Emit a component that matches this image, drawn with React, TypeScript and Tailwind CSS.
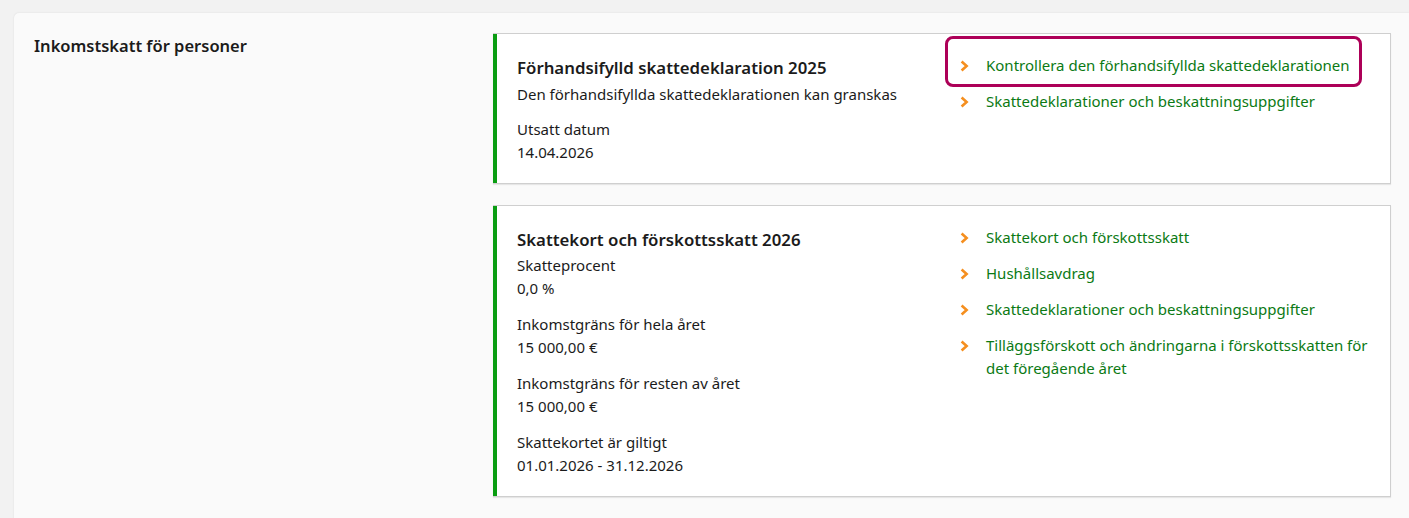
type Row = { label: string; value: string }

interface InfoCardProps {
  title: string
  intro?: string
  rows: Row[]
  links: string[]
  focused?: number
}

function Chevron() {
  return (
    <svg width="9" height="12" viewBox="0 0 9 12" className="shrink-0 mt-[6px]">
      <path d="M1.6 1.6 L6.6 6 L1.6 10.4" fill="none" stroke="#f58f1f" strokeWidth="2.6" strokeLinejoin="miter" />
    </svg>
  )
}

function InfoCard({ title, intro, rows, links, focused }: InfoCardProps) {
  return (
    <div className="flex bg-white border border-[#cfcfcf] border-l-0 shadow-[0_1px_1px_rgba(0,0,0,0.08)]">
      <div className="w-1 shrink-0 bg-[#0a9d12]" />
      <div className="flex-1 grid grid-cols-[428px_1fr] pl-5 pr-5 pt-5 pb-[19px]">
        <div className="flex flex-col">
          <h3 className="text-[16.8px] leading-[28px] font-semibold text-[#1b1b1b]">{title}</h3>
          {intro && <p className="leading-[23px] mt-[1px] text-[#1b1b1b]">{intro}</p>}
          <div className={`flex flex-col gap-[13px] ${intro ? 'mt-3' : 'mt-0'}`}>
            {rows.map((r) => (
              <div key={r.label} className="flex flex-col leading-[23px] text-[#1b1b1b]">
                <span>{r.label}</span>
                <span>{r.value}</span>
              </div>
            ))}
          </div>
        </div>
        <ul className="flex flex-col gap-[13px]">
          {links.map((l, i) => (
            <li key={l}>
              <a
                href="#"
                className={`flex gap-[17px] leading-[23px] text-[#0b7a14] pl-[15px] ${
                  focused === i
                    ? 'outline-[3px] outline-solid outline-[#ad0058] -outline-offset-[3px] rounded-[8px] pt-[18px] pb-[10px] -mt-[18px] -mb-[10px] mr-[8px] pr-[12px]'
                    : ''
                }`}
              >
                <Chevron />
                <span>{l}</span>
              </a>
            </li>
          ))}
        </ul>
      </div>
    </div>
  )
}

export default function App() {
  return (
    <div className="w-[1409px] h-[518px] overflow-hidden bg-[#f2f2f2] pt-[13px] pl-[14px] font-['Noto_Sans','Open_Sans',sans-serif] text-[15px] text-[#1b1b1b]">
      <div className="flex bg-[#fafafa] rounded-l-[5px] shadow-[0_0_2px_rgba(0,0,0,0.1)] pl-5 pr-[18px] pt-5 pb-8">
        <div className="w-[459px] shrink-0">
          <h2 className="text-[16.5px] leading-[26px] font-semibold text-[#1b1b1b]">Inkomstskatt för personer</h2>
        </div>
        <div className="flex-1 flex flex-col gap-[21px]">
          <InfoCard
            title="Förhandsifylld skattedeklaration 2025"
            intro="Den förhandsifyllda skattedeklarationen kan granskas"
            rows={[{ label: 'Utsatt datum', value: '14.04.2026' }]}
            links={['Kontrollera den förhandsifyllda skattedeklarationen', 'Skattedeklarationer och beskattningsuppgifter']}
            focused={0}
          />
          <InfoCard
            title="Skattekort och förskottsskatt 2026"
            rows={[
              { label: 'Skatteprocent', value: '0,0 %' },
              { label: 'Inkomstgräns för hela året', value: '15 000,00 €' },
              { label: 'Inkomstgräns för resten av året', value: '15 000,00 €' },
              { label: 'Skattekortet är giltigt', value: '01.01.2026 - 31.12.2026' },
            ]}
            links={[
              'Skattekort och förskottsskatt',
              'Hushållsavdrag',
              'Skattedeklarationer och beskattningsuppgifter',
              'Tilläggsförskott och ändringarna i förskottsskatten för det föregående året',
            ]}
          />
        </div>
      </div>
    </div>
  )
}
